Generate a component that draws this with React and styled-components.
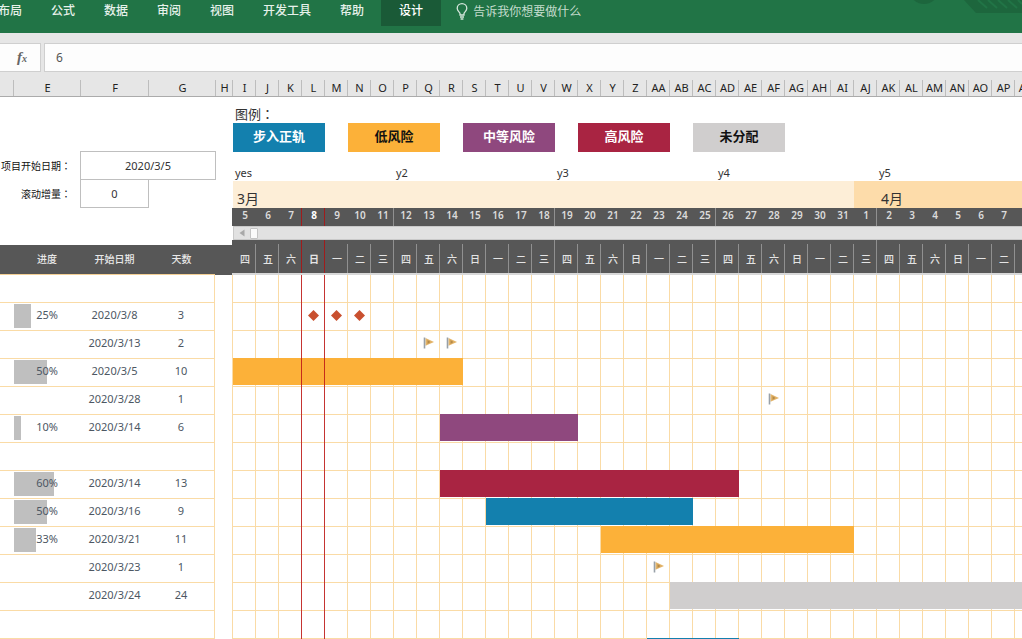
import React from "react";
import styled, { createGlobalStyle, css } from "styled-components";

const DAY = 23;
const DAY_COUNT = 35;
const GRID = "#fadba6";
const DARK = "#575757";
const RISK = {
  track: "#1380ae",
  low: "#fcb139",
  medium: "#8f487e",
  high: "#a92442",
  none: "#d0cece",
};

const Global = createGlobalStyle`
  *, *::before, *::after { box-sizing: border-box; }
  body {
    margin: 0;
    background: #fff;
    font-family: "Noto Sans", "Noto Sans CJK SC", sans-serif;
    font-size: 11px;
    color: #333;
  }
  button, input { font: inherit; color: inherit; border: 0; padding: 0; margin: 0; background: none; }
`;

const Window = styled.div`
  display: flex;
  flex-direction: column;
  height: 100vh;
  overflow: hidden;
`;

/* Ribbon */
const Ribbon = styled.nav`
  display: flex;
  align-items: flex-start;
  flex: none;
  height: 33px;
  overflow: hidden;
  background: #217446;
  color: #e6f1ea;
`;

const Tab = styled.button`
  flex: none;
  height: 26px;
  padding: 0 14px 5px;
  margin-right: 1px;
  font-size: 12px;
  font-weight: 500;
  line-height: 20px;
  white-space: nowrap;
  ${(p) => p.$first && css`margin-left: -16px;`}
  ${(p) =>
    p.$active &&
    css`
      padding: 0 18px 5px;
      margin-left: 2px;
      margin-right: 15px;
      background: #1a5a37;
      color: #fff;
    `}
`;

const TellMe = styled.button`
  display: flex;
  align-items: center;
  gap: 5px;
  height: 22px;
  font-size: 12px;
  white-space: nowrap;
  color: #c4dccd;
`;

const RibbonArt = styled.svg`
  margin-left: auto;
  flex: none;
`;

/* Formula bar */
const FormulaBar = styled.div`
  display: flex;
  gap: 3px;
  flex: none;
  padding: 10px 0 8px;
  background: #e6e6e6;
`;

const FxButton = styled.button`
  width: 41px;
  height: 29px;
  padding-left: 4px;
  border: 1px solid #cfcfcf;
  border-left: 0;
  background: #fdfdfd;
  font-family: "Liberation Serif", serif;
  font-style: italic;
  font-weight: 700;
  font-size: 15px;
  color: #666;
  sub { font-size: 10px; vertical-align: baseline; }
`;

const FormulaInput = styled.input`
  flex: 1;
  min-width: 0;
  height: 29px;
  padding: 0 11px;
  border: 1px solid #cfcfcf;
  border-right: 0;
  background: #fdfdfd;
  font-size: 12px;
  color: #555;
`;

/* Column letters */
const ColumnBar = styled.div`
  display: flex;
  flex: none;
  height: 17px;
  overflow: hidden;
  border-bottom: 1px solid #ababab;
  background: #e6e6e6;
`;

const ColumnHead = styled.div`
  flex: none;
  width: ${(p) => p.$w}px;
  padding-left: 1px;
  border-right: 1px solid #bdbdbd;
  font-size: 11px;
  line-height: 16px;
  text-align: center;
  white-space: nowrap;
  color: #222;
`;

/* Sheet */
const Sheet = styled.main`
  display: flex;
  flex: 1;
  min-height: 0;
`;

const TaskPane = styled.section`
  flex: none;
  width: 232px;
`;

const Settings = styled.div`
  height: 148px;
  padding-top: 54px;
`;

const Setting = styled.div`
  display: flex;
  align-items: center;
  & + & { margin-top: -1px; }
`;

const SettingLabel = styled.label`
  width: 80px;
  padding-right: 9px;
  font-size: 10px;
  text-align: right;
  white-space: nowrap;
  color: #111;
`;

const Colon = styled.span`
  font-family: "Noto Sans CJK TC", sans-serif;
`;

const SettingInput = styled.input`
  width: ${(p) => p.$w}px;
  height: 29px;
  border: 1px solid #bfbfbf;
  text-align: center;
`;

const TaskTable = styled.table`
  width: 232px;
  table-layout: fixed;
  border-collapse: separate;
  border-spacing: 0;
`;

const Th = styled.th`
  width: ${(p) => p.$w}px;
  height: 30px;
  padding: 0 0 2px;
  border-bottom: 1px solid ${(p) => (p.$edge ? DARK : "#f3cf95")};
  background: ${DARK};
  color: #e8e8e8;
  font-size: 10px;
  font-weight: 500;
  white-space: nowrap;
`;

const Td = styled.td`
  position: relative;
  height: 28px;
  padding: 0 0 3px;
  border-bottom: 1px solid ${GRID};
  text-align: center;
  color: #4d5763;
  line-height: 20px;
  ${(p) => p.$last && css`border-right: 1px solid ${GRID};`}
  ${(p) => p.$edge && css`border-bottom: 0;`}
`;

const Progress = styled.span`
  position: absolute;
  top: 1px;
  left: 1px;
  height: 24px;
  background: #bfbfbf;
`;

const Percent = styled.span`
  position: relative;
`;

/* Timeline */
const Timeline = styled.section`
  display: flex;
  flex-direction: column;
  flex: 1;
  min-width: 0;
  overflow: hidden;
`;

const Legend = styled.div`
  padding: 8px 0 0 1px;
`;

const LegendTitle = styled.div`
  height: 18px;
  padding-left: 2px;
  font-size: 13px;
  line-height: 18px;
`;

const LegendItems = styled.div`
  display: flex;
  gap: 23px;
`;

const Chip = styled.div`
  flex: none;
  width: 92px;
  height: 29px;
  background: ${(p) => RISK[p.$risk]};
  color: ${(p) => (p.$dark ? "#111" : "#fff")};
  font-size: 13px;
  font-weight: 700;
  line-height: 27px;
  text-align: center;
`;

const DayGrid = styled.div`
  display: grid;
  flex: none;
  grid-template-columns: repeat(${DAY_COUNT}, ${DAY}px);
  padding-left: 1px;
`;

const WeekRow = styled(DayGrid)`
  height: 29px;
  padding-top: 12px;
  line-height: 18px;
`;

const WeekLabel = styled.div`
  grid-column: span 7;
  padding-left: 2px;
`;

const Months = styled(DayGrid)`
  height: 27px;
`;

const Month = styled.div`
  grid-column: span ${(p) => p.$days};
  padding: 8px 0 0 ${(p) => (p.$late ? 27 : 4)}px;
  background: ${(p) => (p.$late ? "#fddcaa" : "#fdeed7")};
  font-size: 14px;
  line-height: 20px;
`;

const Days = styled(DayGrid)`
  height: 18px;
  background: ${DARK};
`;

const dayEdge = (p) => (p.$red ? "#a01c1c" : p.$line ? "#909090" : "transparent");

const Day = styled.div`
  padding-left: 2px;
  border-right: 1px solid ${dayEdge};
  color: ${(p) => (p.$today ? "#fff" : "#dcdcdc")};
  font-size: 10px;
  font-weight: ${(p) => (p.$today ? 700 : 600)};
  line-height: 15px;
  text-align: center;
`;

const Scroller = styled.div`
  display: flex;
  align-items: center;
  flex: none;
  height: 14px;
  margin-left: 1px;
  border: 1px solid #c9c9c9;
  border-right: 0;
  background: #e1e1e1;
`;

const ScrollArrow = styled.button`
  display: flex;
  align-items: center;
  justify-content: center;
  width: 16px;
  height: 12px;
`;

const ScrollRange = styled.input`
  flex: 1;
  min-width: 0;
  height: 12px;
  appearance: none;
  &::-webkit-slider-thumb {
    appearance: none;
    width: 8px;
    height: 11px;
    border: 1px solid #c4c4c4;
    border-radius: 1px;
    background: #fafafa;
  }
`;

const Weekdays = styled(DayGrid)`
  align-items: end;
  height: 35px;
  border-bottom: 2px solid #d8d8d8;
  background: ${DARK};
`;

const Weekday = styled.div`
  height: ${(p) => (p.$tall ? 33 : 29)}px;
  padding: ${(p) => (p.$tall ? 8 : 4)}px 0 0 2px;
  border-right: 1px solid ${dayEdge};
  color: #e4e4e4;
  font-size: 10px;
  font-weight: ${(p) => (p.$today ? 700 : 500)};
  line-height: 22px;
  text-align: center;
`;

const Chart = styled.div`
  position: relative;
  flex: none;
  border-left: 1px solid ${GRID};
  background: repeating-linear-gradient(
    to right,
    transparent 0 22px,
    ${GRID} 22px 23px
  );
`;

const ChartRow = styled.div`
  display: grid;
  grid-template-columns: repeat(${DAY_COUNT}, ${DAY}px);
  grid-auto-columns: ${DAY}px;
  height: 28px;
  border-bottom: 1px solid ${GRID};
`;

const Bar = styled.div`
  grid-row: 1;
  grid-column: ${(p) => p.$from} / span ${(p) => p.$days};
  height: 27px;
  margin-top: -1px;
  background: ${(p) => RISK[p.$risk]};
`;

const Mark = styled.div`
  grid-row: 1;
  grid-column: ${(p) => p.$from};
  display: flex;
  align-items: center;
  justify-content: center;
  height: 24px;
`;

const TodayBand = styled.div`
  position: absolute;
  top: 0;
  bottom: 0;
  left: ${DAY * 3 - 1}px;
  width: ${DAY + 1}px;
  border: solid rgba(184, 10, 20, 0.8);
  border-width: 0 1px;
`;

const Bulb = () => (
  <svg width="12" height="17" viewBox="0 0 12 17" fill="none" stroke="#d5e6dc" strokeWidth="1.3">
    <path d="M4 12V10.5C3.6 9 1.2 8 1.2 5.3a4.8 4.6 0 0 1 9.6 0C10.8 8 8.4 9 8 10.5V12z" />
    <path d="M4 14h4M4.6 16h2.8" />
  </svg>
);

const Diamond = () => (
  <svg width="11" height="11" viewBox="0 0 11 11">
    <path d="M5.5 0L11 5.5 5.5 11 0 5.5z" fill="#c9502f" />
  </svg>
);

const Flag = () => (
  <svg width="12" height="12" viewBox="0 0 12 12">
    <path d="M2.5 1l8.5 4-8.5 3.8z" fill="#e3b469" />
    <path d="M4.5 3l3 2-3 2z" fill="#b58a48" />
    <path d="M1.5.5v11" stroke="#98a0a8" strokeWidth="1.6" />
  </svg>
);

const TABS = ["布局", "公式", "数据", "审阅", "视图", "开发工具", "帮助"];
const LEGEND = [
  ["track", "步入正轨"],
  ["low", "低风险", true],
  ["medium", "中等风险"],
  ["high", "高风险"],
  ["none", "未分配", true],
];
const WEEKS = ["yes", "y2", "y3", "y4", "y5"];
const WEEKDAY_NAMES = ["四", "五", "六", "日", "一", "二", "三"];
const MARCH_DAYS = 27;
const TODAY = 3;
const DAYS = Array.from({ length: DAY_COUNT }, (_, i) =>
  i < MARCH_DAYS ? i + 5 : i - MARCH_DAYS + 1
);

const letter = (n) =>
  n < 26 ? String.fromCharCode(65 + n) : "A" + String.fromCharCode(65 + n - 26);
const COLUMNS = [
  { name: "", w: 14 },
  { name: "E", w: 67 },
  { name: "F", w: 68 },
  { name: "G", w: 67 },
  { name: "H", w: 17 },
  ...DAYS.map((_, i) => ({ name: letter(i + 8), w: DAY })),
];

const TASKS = [
  {},
  { progress: 25, start: "2020/3/8", days: 3, marks: [4, 5, 6], icon: "goal" },
  { start: "2020/3/13", days: 2, marks: [9, 10] },
  { progress: 50, start: "2020/3/5", days: 10, bar: [1, 10, "low"] },
  { start: "2020/3/28", days: 1, marks: [24] },
  { progress: 10, start: "2020/3/14", days: 6, bar: [10, 6, "medium"] },
  {},
  { progress: 60, start: "2020/3/14", days: 13, bar: [10, 13, "high"] },
  { progress: 50, start: "2020/3/16", days: 9, bar: [12, 9, "track"] },
  { progress: 33, start: "2020/3/21", days: 11, bar: [17, 11, "low"] },
  { start: "2020/3/23", days: 1, marks: [19] },
  { start: "2020/3/24", days: 24, bar: [20, 24, "none"] },
  {},
  { bar: [19, 4, "track"] },
];

function TaskList() {
  return (
    <TaskPane>
      <Settings>
        <Setting>
          <SettingLabel htmlFor="start">
            项目开始日期<Colon>：</Colon>
          </SettingLabel>
          <SettingInput id="start" $w={136} defaultValue="2020/3/5" />
        </Setting>
        <Setting>
          <SettingLabel htmlFor="step">
            滚动增量<Colon>：</Colon>
          </SettingLabel>
          <SettingInput id="step" $w={69} defaultValue="0" />
        </Setting>
      </Settings>
      <TaskTable>
        <thead>
          <tr>
            <Th $w={13} />
            <Th $w={68}>进度</Th>
            <Th $w={67}>开始日期</Th>
            <Th $w={67}>天数</Th>
            <Th $w={17} $edge />
          </tr>
        </thead>
        <tbody>
          {TASKS.map((t, i) => (
            <tr key={i}>
              <Td />
              <Td>
                {t.progress && (
                  <>
                    <Progress style={{ width: Math.round(t.progress * 0.66) }} />
                    <Percent>{t.progress}%</Percent>
                  </>
                )}
              </Td>
              <Td>{t.start}</Td>
              <Td $last>{t.days}</Td>
              <Td $edge />
            </tr>
          ))}
        </tbody>
      </TaskTable>
    </TaskPane>
  );
}

function GanttChart() {
  return (
    <Timeline>
      <Legend>
        <LegendTitle>
          图例<Colon>：</Colon>
        </LegendTitle>
        <LegendItems>
          {LEGEND.map(([risk, name, dark]) => (
            <Chip key={risk} $risk={risk} $dark={dark}>
              {name}
            </Chip>
          ))}
        </LegendItems>
      </Legend>
      <WeekRow>
        {WEEKS.map((w) => (
          <WeekLabel key={w}>{w}</WeekLabel>
        ))}
      </WeekRow>
      <Months>
        <Month $days={MARCH_DAYS}>3月</Month>
        <Month $days={DAY_COUNT - MARCH_DAYS} $late>
          4月
        </Month>
      </Months>
      <Days>
        {DAYS.map((d, i) => (
          <Day
            key={i}
            $line={i % 7 === 6}
            $red={i === TODAY - 1 || i === TODAY}
            $today={i === TODAY}
          >
            {d}
          </Day>
        ))}
      </Days>
      <Scroller>
        <ScrollArrow aria-label="向左滚动">
          <svg width="6" height="8" viewBox="0 0 6 8">
            <path d="M5.5.5v7L.5 4z" fill="#a8a8a8" />
          </svg>
        </ScrollArrow>
        <ScrollRange type="range" min="0" max="100" defaultValue="0" aria-label="滚动增量" />
      </Scroller>
      <Weekdays>
        {DAYS.map((d, i) => {
          const red = i === TODAY - 1 || i === TODAY;
          return (
            <Weekday key={i} $line $tall={red || i % 7 === 6} $red={red} $today={i === TODAY}>
              {WEEKDAY_NAMES[i % 7]}
            </Weekday>
          );
        })}
      </Weekdays>
      <Chart>
        {TASKS.map((t, i) => (
          <ChartRow key={i}>
            {t.bar && <Bar $from={t.bar[0]} $days={t.bar[1]} $risk={t.bar[2]} />}
            {t.marks?.map((m) => (
              <Mark key={m} $from={m}>
                {t.icon === "goal" ? <Diamond /> : <Flag />}
              </Mark>
            ))}
          </ChartRow>
        ))}
        <TodayBand />
      </Chart>
    </Timeline>
  );
}

export default function App() {
  return (
    <Window>
      <Global />
      <Ribbon>
        {TABS.map((t, i) => (
          <Tab key={t} $first={i === 0}>
            {t}
          </Tab>
        ))}
        <Tab $active>设计</Tab>
        <TellMe>
          <Bulb />
          告诉我你想要做什么
        </TellMe>
        <RibbonArt width="122" height="14" viewBox="0 0 122 14">
          <circle cx="24" cy="-11" r="15" fill="#1d663d" />
          <path d="M64 0h58v13H76z" fill="#1d663d" />
          <path d="M78 0l9 8M88 0l9 8M98 0l9 8M108 0l9 8M118 0l4 4" stroke="#217446" strokeWidth="2" />
        </RibbonArt>
      </Ribbon>
      <FormulaBar>
        <FxButton aria-label="插入函数">
          f<sub>x</sub>
        </FxButton>
        <FormulaInput aria-label="编辑栏" defaultValue="6" />
      </FormulaBar>
      <ColumnBar>
        {COLUMNS.map((c, i) => (
          <ColumnHead key={i} $w={c.w}>
            {c.name}
          </ColumnHead>
        ))}
      </ColumnBar>
      <Sheet>
        <TaskList />
        <GanttChart />
      </Sheet>
    </Window>
  );
}
